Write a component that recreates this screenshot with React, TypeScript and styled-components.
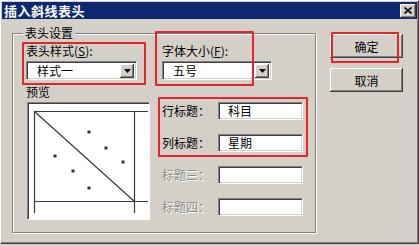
import styled, { createGlobalStyle } from "styled-components";

const GlobalStyle = createGlobalStyle`
  html, body {
    margin: 0;
    padding: 0;
    background: #d4d0c8;
  }
  body {
    font-family: "Noto Sans CJK SC", "Liberation Sans", sans-serif;
    font-size: 12px;
    color: #000;
  }
`;

const Window = styled.div`
  position: relative;
  box-sizing: border-box;
  width: 419px;
  height: 244px;
  background: #d4d0c8;
  border-left: 1px solid #ffffff;
  border-top: 1px solid #ffffff;
  border-right: 1px solid #404040;
  border-bottom: 1px solid #404040;
  box-shadow: inset -1px -1px 0 #808080;
  overflow: hidden;
`;

const TitleBar = styled.div`
  display: flex;
  align-items: center;
  justify-content: space-between;
  height: 17px;
  margin: 1px 1px 0 1px;
  background: #0c2870;
`;

const Title = styled.span`
  padding-left: 2px;
  color: #ffffff;
  font-size: 13px;
  font-weight: bold;
  line-height: 17px;
  letter-spacing: 0.5px;
`;

const CloseButton = styled.div`
  display: flex;
  align-items: center;
  justify-content: center;
  width: 16px;
  height: 14px;
  margin-right: 1px;
  box-sizing: border-box;
  background: #d4d0c8;
  box-shadow: inset -1px -1px 0 #404040, inset 1px 1px 0 #ffffff,
    inset -2px -2px 0 #808080;
`;

const Body = styled.div`
  display: flex;
  align-items: flex-start;
  padding: 14px 0 0 11px;
  gap: 14px;
`;

const GroupBox = styled.div`
  position: relative;
  box-sizing: border-box;
  width: 304px;
  height: 200px;
  border: 1px solid #808080;
  box-shadow: inset 1px 1px 0 #ffffff, 1px 1px 0 #ffffff;
  padding: 10px 0 0 13px;
`;

const Legend = styled.span`
  position: absolute;
  top: -8px;
  left: 10px;
  padding: 0 2px;
  background: #d4d0c8;
  line-height: 14px;
  font-size: 12px;
`;

const Columns = styled.div`
  display: grid;
  grid-template-columns: 124px 1fr;
  column-gap: 12px;
`;

const Column = styled.div`
  display: flex;
  flex-direction: column;
  align-items: flex-start;
`;

const FieldLabel = styled.div<{ $gap?: number }>`
  margin-top: ${(p) => p.$gap ?? 0}px;
  line-height: 14px;
  height: 14px;
  white-space: nowrap;
  & u {
    text-decoration: underline;
  }
`;

const SelectBox = styled.div<{ $width: number }>`
  display: flex;
  align-items: center;
  justify-content: space-between;
  box-sizing: border-box;
  width: ${(p) => p.$width}px;
  height: 19px;
  margin-top: 3px;
  padding: 0 2px 0 10px;
  background: #ffffff;
  border-top: 1px solid #808080;
  border-left: 1px solid #808080;
  border-bottom: 1px solid #ffffff;
  border-right: 1px solid #ffffff;
  box-shadow: inset 1px 1px 0 #404040, inset -1px -1px 0 #d4d0c8;
  line-height: 15px;
`;

const ArrowButton = styled.div`
  display: flex;
  align-items: center;
  justify-content: center;
  width: 14px;
  height: 14px;
  box-sizing: border-box;
  background: #d4d0c8;
  box-shadow: inset -1px -1px 0 #404040, inset 1px 1px 0 #ffffff,
    inset -2px -2px 0 #808080;
`;

const Preview = styled.div`
  box-sizing: border-box;
  width: 123px;
  height: 118px;
  margin: 3px 0 0 1px;
  background: #ffffff;
  border-top: 1px solid #808080;
  border-left: 1px solid #808080;
  border-bottom: 1px solid #ffffff;
  border-right: 1px solid #ffffff;
  box-shadow: inset 1px 1px 0 #404040;
  & svg {
    display: block;
  }
`;

const TitleRows = styled.div`
  display: flex;
  flex-direction: column;
  gap: 14px;
  margin-top: 22px;
`;

const TitleRow = styled.div`
  display: flex;
  align-items: center;
`;

const RowLabel = styled.span<{ $disabled?: boolean }>`
  width: 56px;
  line-height: 14px;
  color: ${(p) => (p.$disabled ? "#8c8a84" : "#000")};
  text-shadow: ${(p) => (p.$disabled ? "1px 1px 0 #ffffff" : "none")};
`;

const TextBox = styled.div`
  box-sizing: border-box;
  width: 85px;
  height: 18px;
  padding-left: 9px;
  background: #ffffff;
  border-top: 1px solid #808080;
  border-left: 1px solid #808080;
  border-bottom: 1px solid #ffffff;
  border-right: 1px solid #ffffff;
  box-shadow: inset 1px 1px 0 #404040, inset -1px -1px 0 #d4d0c8;
  line-height: 16px;
`;

const ButtonColumn = styled.div`
  display: flex;
  flex-direction: column;
  gap: 10px;
  margin-top: 1px;
`;

const Button = styled.div`
  display: flex;
  align-items: center;
  justify-content: center;
  box-sizing: border-box;
  width: 73px;
  height: 24px;
  background: #d4d0c8;
  box-shadow: inset -1px -1px 0 #404040, inset 1px 1px 0 #ffffff,
    inset -2px -2px 0 #808080;
  font-size: 12px;
`;

const Highlight = styled.div<{
  $x: number;
  $y: number;
  $w: number;
  $h: number;
}>`
  position: absolute;
  left: ${(p) => p.$x}px;
  top: ${(p) => p.$y}px;
  width: ${(p) => p.$w}px;
  height: ${(p) => p.$h}px;
  box-sizing: border-box;
  border: 2px solid #e8232b;
  border-radius: 1px;
  pointer-events: none;
`;

const DownArrow = () => (
  <svg width="7" height="4" viewBox="0 0 7 4">
    <path d="M0 0H7L3.5 4Z" fill="#000" />
  </svg>
);

const CloseGlyph = () => (
  <svg width="8" height="7" viewBox="0 0 8 7">
    <path d="M0.5 0.5L7.5 6.5M7.5 0.5L0.5 6.5" stroke="#000" strokeWidth="1.6" />
  </svg>
);

const dots = [
  [61, 29],
  [78, 45],
  [27, 53],
  [95, 59],
  [45, 68],
  [61, 85],
];

const PreviewDrawing = () => (
  <svg width="121" height="116" viewBox="0 0 121 116">
    <g stroke="#3a3a3a" strokeWidth="1.2" fill="none">
      <path d="M6 8.5H120" />
      <path d="M6 98.5H120" />
      <path d="M6.5 8V110" />
      <path d="M106.5 8V110" />
      <path d="M6.5 8.5L106.5 98.5" />
    </g>
    {dots.map(([x, y], i) => (
      <rect key={i} x={x - 1.5} y={y - 1.5} width="3" height="3" fill="#333" />
    ))}
  </svg>
);

const Select = ({ width, value }: { width: number; value: string }) => (
  <SelectBox $width={width}>
    <span>{value}</span>
    <ArrowButton>
      <DownArrow />
    </ArrowButton>
  </SelectBox>
);

const App = () => {
  return (
    <>
      <GlobalStyle />
      <Window>
        <TitleBar>
          <Title>插入斜线表头</Title>
          <CloseButton>
            <CloseGlyph />
          </CloseButton>
        </TitleBar>
        <Body>
          <GroupBox>
            <Legend>表头设置</Legend>
            <Columns>
              <Column>
                <FieldLabel>
                  表头样式(<u>S</u>):
                </FieldLabel>
                <Select width={111} value="样式一" />
                <FieldLabel $gap={5}>预览</FieldLabel>
                <Preview>
                  <PreviewDrawing />
                </Preview>
              </Column>
              <Column>
                <FieldLabel>
                  字体大小(<u>F</u>):
                </FieldLabel>
                <Select width={110} value="五号" />
                <TitleRows>
                  <TitleRow>
                    <RowLabel>行标题：</RowLabel>
                    <TextBox>科目</TextBox>
                  </TitleRow>
                  <TitleRow>
                    <RowLabel>列标题：</RowLabel>
                    <TextBox>星期</TextBox>
                  </TitleRow>
                  <TitleRow>
                    <RowLabel $disabled>标题三：</RowLabel>
                    <TextBox />
                  </TitleRow>
                  <TitleRow>
                    <RowLabel $disabled>标题四：</RowLabel>
                    <TextBox />
                  </TitleRow>
                </TitleRows>
              </Column>
            </Columns>
          </GroupBox>
          <ButtonColumn>
            <Button>确定</Button>
            <Button>取消</Button>
          </ButtonColumn>
        </Body>
        <Highlight $x={21} $y={41} $w={124} $h={43} />
        <Highlight $x={154} $y={30} $w={99} $h={55} />
        <Highlight $x={157} $y={96} $w={150} $h={60} />
        <Highlight $x={330} $y={31} $w={68} $h={31} />
      </Window>
    </>
  );
};

export default App;
